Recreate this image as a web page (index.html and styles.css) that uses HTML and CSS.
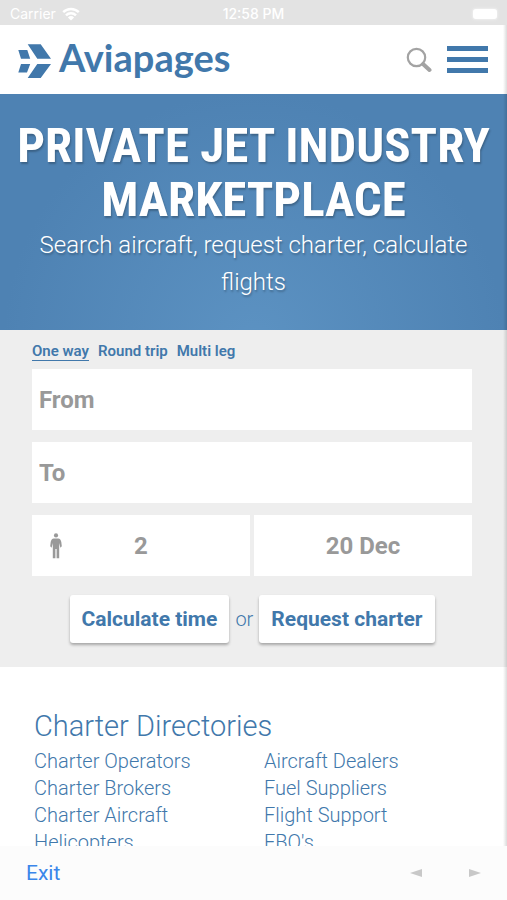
FILE: index.html
```html
<!DOCTYPE html>
<html lang="en">
<head>
<meta charset="utf-8">
<meta name="viewport" content="width=device-width, initial-scale=1">
<title>Aviapages</title>
<link rel="stylesheet" href="styles.css">
</head>
<body>
<div class="status">
  <div class="status-left">
    <span>Carrier</span>
    <svg class="wifi" viewBox="0 0 18 14" aria-hidden="true"><path d="M1.2 5.2a11.2 11.2 0 0 1 15.6 0M4 8.3a7.2 7.2 0 0 1 10 0" fill="none" stroke="currentColor" stroke-width="2.5"/><path d="M9 13.6 5.9 10.5a4.5 4.5 0 0 1 6.2 0z" fill="currentColor"/></svg>
  </div>
  <span class="time">12:58 PM</span>
  <div class="status-right"><span class="battery"></span></div>
</div>
<div class="page">
  <header class="top">
    <a class="brand" href="#">
      <svg class="mark" viewBox="0 -1 34 36" aria-hidden="true"><path d="M9.7 1.3H22.7L33 15.7H19.3zM.3 7H9.3L12.2 15.7H3zM3 21H12.2L9 29.5H.3zM19.3 21H33L22.7 35H9.7z" fill="currentColor"/></svg>
      <span class="name">Aviapages</span>
    </a>
    <button class="icon-button" type="button" aria-label="Search">
      <svg class="search" viewBox="0 0 26 26" aria-hidden="true"><circle cx="10.5" cy="10.5" r="8.7" fill="none" stroke="currentColor" stroke-width="2.2"/><path d="M17 17l6.5 6" stroke="currentColor" stroke-width="4" stroke-linecap="round"/></svg>
    </button>
    <button class="icon-button menu" type="button" aria-label="Menu"><span></span><span></span><span></span></button>
  </header>
  <section class="hero">
    <h1>Private jet industry marketplace</h1>
    <p>Search aircraft, request charter, calculate flights</p>
  </section>
  <form class="booking">
    <nav class="trips">
      <a class="active" href="#">One way</a>
      <a href="#">Round trip</a>
      <a href="#">Multi leg</a>
    </nav>
    <input class="field" type="text" placeholder="From" aria-label="From">
    <input class="field" type="text" placeholder="To" aria-label="To">
    <div class="pair">
      <label class="passengers">
        <svg class="person" viewBox="0 0 12 26" aria-hidden="true"><circle cx="6" cy="2.4" r="2.1"/><path d="M3.8 5.4h4.4Q10.8 5.8 11.3 9l.5 4.2-1.4 1.6L9.2 10v15.2H6.6V16H5.4v9.2H2.8V10l-1.2 4.8L.2 13.2.7 9Q1.2 5.8 3.8 5.4z"/></svg>
        <input class="field centered" type="text" value="2" aria-label="Passengers">
      </label>
      <input class="field centered" type="text" value="20 Dec" aria-label="Date">
    </div>
    <div class="actions">
      <button type="button">Calculate time</button>
      <span>or</span>
      <button type="button">Request charter</button>
    </div>
  </form>
  <section class="directories">
    <h2>Charter Directories</h2>
    <div class="links">
      <a href="#">Charter Operators</a><a href="#">Aircraft Dealers</a>
      <a href="#">Charter Brokers</a><a href="#">Fuel Suppliers</a>
      <a href="#">Charter Aircraft</a><a href="#">Flight Support</a>
      <a href="#">Helicopters</a><a href="#">FBO's</a>
    </div>
  </section>
</div>
<footer class="toolbar">
  <button class="exit" type="button">Exit</button>
  <button class="step" type="button" aria-label="Back"><svg viewBox="0 0 12 8" aria-hidden="true"><path d="M12 0v8L0 4z"/></svg></button>
  <button class="step" type="button" aria-label="Forward"><svg viewBox="0 0 12 8" aria-hidden="true"><path d="M0 0v8l12-4z"/></svg></button>
</footer>
</body>
</html>
```
FILE: styles.css
```css
* {
  box-sizing: border-box;
}

body {
  margin: 0;
  height: 100vh;
  display: flex;
  flex-direction: column;
  font-family: Roboto, "Liberation Sans", sans-serif;
  color: #4178ab;
  background: #fff;
}

a {
  color: inherit;
  text-decoration: none;
}

button,
input {
  font: inherit;
  color: inherit;
  border: 0;
  padding: 0;
  background: none;
}

.status {
  display: grid;
  grid-template-columns: 1fr auto 1fr;
  align-items: center;
  flex: none;
  height: 25px;
  padding: 2px 10px 0;
  font: 500 14px/20px Inter, sans-serif;
  color: #fff;
  background: #e3e3e3;
}

.status-left {
  display: flex;
  align-items: center;
  gap: 6px;
  font-weight: 400;
}

.wifi {
  width: 18px;
  height: 14px;
}

.battery {
  display: block;
  width: 24px;
  height: 10px;
  margin-left: auto;
  border-radius: 3px;
  background: #fff;
  box-shadow: 0 0 2px 1px #eee;
}

.page {
  position: relative;
  flex: 1;
  min-height: 0;
  overflow: hidden;
}

.page::after {
  content: "";
  position: absolute;
  inset: 0 0 0 auto;
  width: 4px;
  background: linear-gradient(to right, rgba(0, 0, 0, 0), rgba(0, 0, 0, 0.14));
}

.top {
  display: flex;
  align-items: center;
  height: 69px;
  padding: 0 19px 0 18px;
}

.brand {
  display: flex;
  align-items: center;
  gap: 7px;
  margin-right: auto;
}

.mark {
  width: 34px;
  height: 36px;
}

.name {
  padding-bottom: 6px;
  font: 700 38px/44px Lato, sans-serif;
}

.icon-button {
  display: block;
}

.search {
  display: block;
  width: 26px;
  height: 26px;
  color: #a3a3a3;
}

.menu {
  display: grid;
  gap: 6px;
  width: 41px;
  margin-left: 15px;
}

.menu span {
  height: 5px;
  background: #4178ab;
}

.hero {
  padding: 25px 12px 29px;
  text-align: center;
  color: #fff;
  background: radial-gradient(circle at 50% 105%, #5c92c2, #4e82b3 250px);
  text-shadow: 1px 2px 2px rgba(0, 0, 0, 0.25);
}

.hero h1 {
  margin: 0;
  font: 700 49px/54px "Roboto Condensed", "Liberation Sans Narrow", sans-serif;
  text-transform: uppercase;
}

.hero p {
  margin: 0;
  padding: 0 12px;
  font-size: 24px;
  line-height: 37px;
  font-weight: 300;
}

.booking {
  display: grid;
  gap: 12px;
  padding: 12px 35px 24px 32px;
  background: #eee;
}

.trips {
  display: flex;
  gap: 9px;
  margin-bottom: -4px;
  font-size: 15px;
  line-height: 18px;
  font-weight: 600;
}

.trips .active {
  border-bottom: 1px solid;
}

.field {
  width: 100%;
  min-width: 0;
  height: 61px;
  padding: 0 7px;
  font-size: 24px;
  font-weight: 700;
  color: #999;
  background: #fff;
}

.field::placeholder {
  color: #999;
  opacity: 1;
}

.centered {
  text-align: center;
}

.pair {
  display: grid;
  grid-template-columns: 1fr 1fr;
  gap: 4px;
}

.passengers {
  position: relative;
}

.person {
  position: absolute;
  left: 18px;
  top: 18px;
  width: 12px;
  height: 26px;
  fill: #999;
}

.actions {
  display: flex;
  justify-content: center;
  align-items: center;
  gap: 6px;
  margin-top: 7px;
  font-size: 20px;
  font-weight: 300;
}

.actions button {
  height: 48px;
  padding: 0 12px;
  border-radius: 3px;
  font-size: 21px;
  font-weight: 700;
  background: #fff;
  box-shadow: 0 2px 3px rgba(0, 0, 0, 0.3);
}

.directories {
  padding: 41px 34px 0;
}

.directories h2 {
  margin: 0 0 4px;
  font-size: 29px;
  line-height: 36px;
  font-weight: 300;
}

.links {
  display: grid;
  grid-template-columns: 230px 1fr;
  font-size: 20px;
  line-height: 27px;
  font-weight: 300;
}

.toolbar {
  display: flex;
  align-items: center;
  flex: none;
  height: 54px;
  padding: 0 26px;
  background: #fcfcfc;
}

.exit {
  margin-right: auto;
  font-size: 21px;
  line-height: 28px;
  color: #3a86ea;
}

.step {
  margin-left: 47px;
}

.step svg {
  display: block;
  width: 12px;
  height: 8px;
  fill: #c8c8c8;
}
```
